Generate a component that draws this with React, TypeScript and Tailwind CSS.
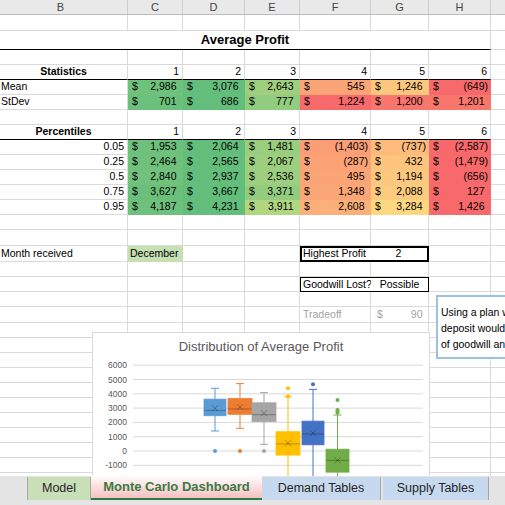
import React from "react";

const WC = [
  "w-[128px]",
  "w-[55px]",
  "w-[62px]",
  "w-[55px]",
  "w-[71px]",
  "w-[58px]",
  "w-[62px]",
  "w-[60px]",
];

const RED = [248, 105, 107];
const YEL = [255, 235, 132];
const GRN = [99, 190, 123];

function scale(values: number[], reverse = false): string[] {
  const s = [...values].sort((a, b) => a - b);
  const min = s[0];
  const max = s[s.length - 1];
  const n = s.length;
  const mid = n % 2 ? s[(n - 1) / 2] : (s[n / 2 - 1] + s[n / 2]) / 2;
  const lo = reverse ? GRN : RED;
  const hi = reverse ? RED : GRN;
  return values.map((v) => {
    let c: number[];
    if (v <= mid) {
      const t = mid === min ? 1 : (v - min) / (mid - min);
      c = lo.map((x, i) => x + t * (YEL[i] - x));
    } else {
      const t = (v - mid) / (max - mid);
      c = YEL.map((x, i) => x + t * (hi[i] - x));
    }
    return `rgb(${c.map((x) => Math.round(x)).join(",")})`;
  });
}

type CellProps = {
  i: number;
  bg?: string;
  heavy?: boolean;
  cls?: string;
  children?: React.ReactNode;
};

function Cell({ i, bg, heavy, cls = "", children }: CellProps) {
  return (
    <div
      className={`${WC[i]} shrink-0 h-full border-r border-b border-r-[#dadada] ${
        heavy ? "border-b-black" : "border-b-[#dadada]"
      } flex items-center overflow-hidden whitespace-nowrap ${cls}`}
      style={
        bg
          ? {
              backgroundColor: bg,
              borderRightColor: bg,
              ...(heavy ? {} : { borderBottomColor: bg }),
            }
          : undefined
      }
    >
      {children}
    </div>
  );
}

function Acct({ v, cls = "pl-[4px]" }: { v: number; cls?: string }) {
  const s = Math.abs(v).toLocaleString("en-US");
  return (
    <div className={`flex w-full justify-between pr-[2px] ${cls}`}>
      <span>$</span>
      <span>
        {v < 0 ? `(${s})` : s}
        {v >= 0 && <span className="invisible">)</span>}
      </span>
    </div>
  );
}

function Empty({ h }: { h: string }) {
  return (
    <div className={`flex ${h}`}>
      {WC.map((_, i) => (
        <Cell key={i} i={i} />
      ))}
    </div>
  );
}

function HeaderNums() {
  return (
    <>
      {[1, 2, 3, 4, 5, 6].map((n, k) => (
        <Cell key={n} i={k + 1} heavy cls="justify-end pr-[3px]">
          {n}
        </Cell>
      ))}
    </>
  );
}

function DataRow({ label, values, colors, right }: { label: string; values: number[]; colors: string[]; right?: boolean }) {
  return (
    <div className="flex h-[15px]">
      <Cell i={0} cls={right ? "justify-end pr-[3px]" : "pl-[1px]"}>
        {label}
      </Cell>
      {values.map((v, k) => (
        <Cell key={k} i={k + 1} bg={colors[k]}>
          <Acct v={v} />
        </Cell>
      ))}
      <Cell i={7} />
    </div>
  );
}

const mean = [2986, 3076, 2643, 545, 1246, -649];
const sd = [701, 686, 777, 1224, 1200, 1201];
const pct: [string, number[]][] = [
  ["0.05", [1953, 2064, 1481, -1403, -737, -2587]],
  ["0.25", [2464, 2565, 2067, -287, 432, -1479]],
  ["0.5", [2840, 2937, 2536, 495, 1194, -656]],
  ["0.75", [3627, 3667, 3371, 1348, 2088, 127]],
  ["0.95", [4187, 4231, 3911, 2608, 3284, 1426]],
];

const yv = (v: number) => 118 - v * 0.0143;

const series = [
  { x: 122, w: 22, c: "#5b9bd5", q1: 2464, q3: 3627, med: 2840, mean: 2986, lo: 1400, hi: 4385, out: [0] },
  { x: 147, w: 24, c: "#ed7d31", q1: 2565, q3: 3667, med: 2937, mean: 3076, lo: 1585, hi: 4710, out: [0] },
  { x: 171, w: 24, c: "#a5a5a5", q1: 2067, q3: 3371, med: 2536, mean: 2643, lo: 466, hi: 4080, out: [0] },
  { x: 195, w: 24, c: "#ffc000", q1: -287, q3: 1348, med: 495, mean: 545, lo: -6000, hi: 3780, out: [3820, 4385] },
  { x: 220, w: 22, c: "#4472c4", q1: 432, q3: 2088, med: 1194, mean: 1246, lo: -6000, hi: 4310, out: [4660] },
  { x: 244.5, w: 23, c: "#70ad47", q1: -1479, q3: 127, med: -656, mean: -649, lo: -6000, hi: 2517, out: [2680, 2800, 2870, 3566] },
];

function Chart() {
  const ticks = [6000, 5000, 4000, 3000, 2000, 1000, 0, -1000];
  return (
    <div className="absolute left-[92px] top-[332px] w-[338px] h-[180px] bg-white border border-[#d9d9d9]">
      <svg width="338" height="180" className="block">
        <text
          x="168"
          y="18"
          textAnchor="middle"
          fontSize="13"
          fill="#595959"
          fontFamily="'Liberation Sans', Arial, sans-serif"
        >
          Distribution of Average Profit
        </text>
        {ticks.map((t) => (
          <g key={t}>
            <line x1="40" x2="330" y1={yv(t)} y2={yv(t)} stroke="#d9d9d9" strokeWidth="1" />
            <text
              x="34"
              y={yv(t) + 3}
              textAnchor="end"
              fontSize="8.5"
              fill="#595959"
              fontFamily="'Liberation Sans', Arial, sans-serif"
            >
              {t}
            </text>
          </g>
        ))}
        <line x1="40" x2="330" y1={yv(-2000)} y2={yv(-2000)} stroke="#d9d9d9" strokeWidth="1" />
        {series.map((s, k) => {
          const l = s.x - s.w / 2;
          const yq3 = yv(s.q3);
          const yq1 = yv(s.q1);
          const ym = yv(s.mean);
          return (
            <g key={k}>
              <line x1={s.x} x2={s.x} y1={yv(s.hi)} y2={yq3} stroke={s.c} strokeWidth="1" />
              <line x1={s.x} x2={s.x} y1={yq1} y2={yv(s.lo)} stroke={s.c} strokeWidth="1" />
              <line x1={s.x - 4} x2={s.x + 4} y1={yv(s.hi)} y2={yv(s.hi)} stroke={s.c} strokeWidth="1" />
              <line x1={s.x - 4} x2={s.x + 4} y1={yv(s.lo)} y2={yv(s.lo)} stroke={s.c} strokeWidth="1" />
              <rect x={l} y={yq3} width={s.w} height={yq1 - yq3} fill={s.c} stroke={s.c} strokeWidth="0.8" />
              <line x1={l} x2={l + s.w} y1={yv(s.med)} y2={yv(s.med)} stroke="rgba(0,0,0,0.28)" strokeWidth="1" />
              <path
                d={`M${s.x - 3} ${ym - 3} L${s.x + 3} ${ym + 3} M${s.x + 3} ${ym - 3} L${s.x - 3} ${ym + 3}`}
                stroke="rgba(0,0,0,0.28)"
                strokeWidth="1"
              />
              {s.out.map((o, j) => (
                <circle key={j} cx={s.x} cy={yv(o)} r="2" fill={s.c} />
              ))}
            </g>
          );
        })}
      </svg>
    </div>
  );
}

function TextBox() {
  return (
    <div className="absolute left-[436px] top-[295px] w-[150px] h-[64px] bg-white border-2 border-[#9cc0e0] pl-[3px] pt-[7px] text-[10.5px] leading-[16px] whitespace-nowrap">
      <div>Using a plan with a</div>
      <div>deposit would risk loss</div>
      <div>of goodwill and</div>
    </div>
  );
}

function TabBar() {
  return (
    <div className="relative z-10 h-[29px] shrink-0 bg-[#e4e4e4] flex items-start text-[12.5px] text-[#262626]">
      <div className="w-[27px] shrink-0" />
      <div className="w-px h-[23px] mt-[1px] bg-[#a8a8a8] shrink-0" />
      <div className="w-[62px] h-[23px] mt-[1px] bg-[#c8dfb8] shrink-0 flex items-center justify-center">Model</div>
      <div className="w-px h-[23px] mt-[1px] bg-[#a8a8a8] shrink-0" />
      <div className="w-[171px] h-[25px] -mt-[1px] shrink-0 bg-gradient-to-b from-white to-[#f5c0c0] border-b-2 border-[#2f7a42] flex items-center justify-center font-bold text-[13px] text-[#3a7a46]">
        Monte Carlo Dashboard
      </div>
      <div className="w-[118px] h-[23px] mt-[1px] bg-[#c6d9ee] shrink-0 flex items-center justify-center">Demand Tables</div>
      <div className="w-px h-[23px] mt-[1px] bg-[#a8a8a8] shrink-0" />
      <div className="w-[2px] shrink-0" />
      <div className="w-[105px] h-[23px] mt-[1px] bg-[#c6d9ee] shrink-0 flex items-center justify-center">Supply Tables</div>
      <div className="w-px h-[23px] mt-[1px] bg-[#a8a8a8] shrink-0" />
    </div>
  );
}

export default function App() {
  const meanC = scale(mean);
  const sdC = scale(sd, true);
  const letters = ["B", "C", "D", "E", "F", "G", "H", ""];
  return (
    <div className="relative w-[505px] h-[505px] overflow-hidden bg-white font-['Liberation_Sans',Arial,sans-serif] text-[10.5px] text-black flex flex-col">
      <div className="flex h-[15px] shrink-0 bg-[#e9e9e9] border-b border-[#bdbdbd]">
        {letters.map((l, i) => (
          <div
            key={i}
            className={`${WC[i]} shrink-0 h-full border-r border-[#cfcfcf] flex items-center justify-center text-[11px] text-[#444] ${
              i === 0 ? "pr-[6px]" : ""
            }`}
          >
            {l}
          </div>
        ))}
      </div>

      <div className="flex-1 overflow-hidden">
        <Empty h="h-[16px]" />
        <div className="flex h-[19px]">
          <div className="w-[491px] shrink-0 h-full border-b border-b-black border-r border-r-[#dadada] flex items-center justify-center font-bold text-[13px]">
            Average Profit
          </div>
          <Cell i={7} />
        </div>
        <Empty h="h-[15px]" />
        <div className="flex h-[15px]">
          <Cell i={0} heavy cls="justify-center font-bold">
            Statistics
          </Cell>
          <HeaderNums />
          <Cell i={7} />
        </div>
        <DataRow label="Mean" values={mean} colors={meanC} />
        <DataRow label="StDev" values={sd} colors={sdC} />
        <Empty h="h-[15px]" />
        <div className="flex h-[15px]">
          <Cell i={0} heavy cls="justify-center font-bold">
            Percentiles
          </Cell>
          <HeaderNums />
          <Cell i={7} />
        </div>
        {pct.map(([l, v]) => (
          <DataRow key={l} label={l} values={v} colors={scale(v)} right />
        ))}
        <Empty h="h-[15px]" />
        <Empty h="h-[16px]" />
        <div className="flex h-[16px]">
          <Cell i={0} cls="pl-[1px]">
            Month received
          </Cell>
          <Cell i={1} bg="#c6e0b4" cls="pl-[2px]">
            December
          </Cell>
          <Cell i={2} />
          <Cell i={3} />
          <div className="w-[129px] shrink-0 h-full border-2 border-black flex items-center">
            <div className="w-[69px] pl-[1px] whitespace-nowrap">Highest Profit</div>
            <div className="flex-1 text-center pr-[1px]">2</div>
          </div>
          <Cell i={6} />
          <Cell i={7} />
        </div>
        <Empty h="h-[15px]" />
        <div className="flex h-[15px]">
          <Cell i={0} />
          <Cell i={1} />
          <Cell i={2} />
          <Cell i={3} />
          <div className="w-[129px] shrink-0 h-full border border-black flex items-center">
            <div className="w-[70px] pl-[2px] whitespace-nowrap overflow-hidden">Goodwill Lost?</div>
            <div className="flex-1 text-center">Possible</div>
          </div>
          <Cell i={6} />
          <Cell i={7} />
        </div>
        <Empty h="h-[15px]" />
        <div className="flex h-[16px]">
          <Cell i={0} />
          <Cell i={1} />
          <Cell i={2} />
          <Cell i={3} />
          <Cell i={4} cls="pl-[3px] text-[#a3a3a3]">
            Tradeoff
          </Cell>
          <Cell i={5} cls="text-[#a3a3a3]">
            <Acct v={90} cls="pl-[6px]" />
          </Cell>
          <Cell i={6} />
          <Cell i={7} />
        </div>
        {Array.from({ length: 12 }).map((_, k) => (
          <Empty key={k} h="h-[15px]" />
        ))}
      </div>

      <TabBar />
      <Chart />
      <TextBox />
    </div>
  );
}
